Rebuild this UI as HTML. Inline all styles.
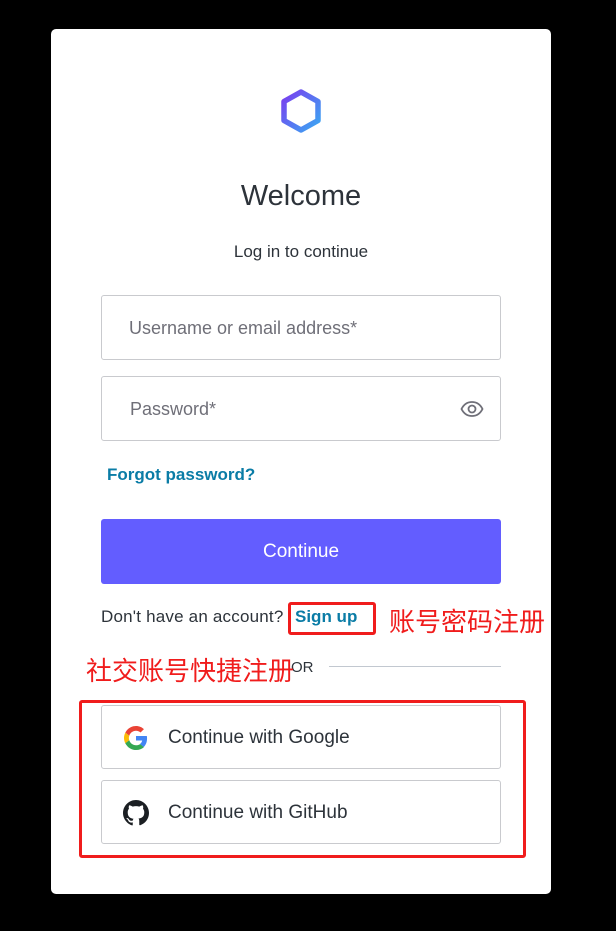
<!DOCTYPE html>
<html><head><style>
body{margin:0;width:616px;height:931px;background:#000;font-family:"Liberation Sans",Arial,sans-serif;position:relative;overflow:hidden}
.card{position:absolute;left:51px;top:29px;width:500px;height:865px;background:#fff;border-radius:5px}
.a{position:absolute}
.inp{position:absolute;left:101px;width:398px;height:63px;border:1px solid #c9cace;border-radius:3px;color:#6f6f78;font-size:18px;box-sizing:border-box}
.btn{position:absolute;left:101px;width:400px;height:64px;border:1px solid #c9cace;border-radius:3px;box-sizing:border-box;font-size:19px;color:#2d333a}
.red{position:absolute;border:3px solid #f01c1c;border-radius:3px;box-sizing:border-box}
.cn{position:absolute;color:#f01c1c;font-family:"Noto Sans CJK SC",sans-serif;font-size:26px;line-height:32px;font-weight:400}
</style></head><body>
<div class="card"></div>
<svg class="a" style="left:278px;top:88px" width="46" height="46" viewBox="0 0 46 46">
<defs><linearGradient id="g" x1="0" y1="0" x2="1" y2="1"><stop offset="0" stop-color="#7a3df0"/><stop offset="1" stop-color="#3aa8f2"/></linearGradient></defs>
<polygon points="23,4 40,13.5 40,32.5 23,42 6,32.5 6,13.5" fill="none" stroke="url(#g)" stroke-width="5.5" stroke-linejoin="round"/>
</svg>
<div class="a" style="left:51px;width:500px;top:180px;text-align:center;font-size:29px;color:#2d333a">Welcome</div>
<div class="a" style="left:51px;width:500px;top:242px;text-align:center;font-size:17px;color:#2d333a">Log in to continue</div>
<div class="inp" style="top:295px;height:65px;width:400px"><span class="a" style="left:27px;top:22px">Username or email address*</span></div>
<div class="inp" style="top:376px;height:65px;width:400px"><span class="a" style="left:28px;top:22px">Password*</span>
<svg class="a" style="left:358px;top:22px" width="24" height="20" viewBox="0 0 24 20"><path d="M1.5 10C4 5 8 3 12 3s8 2 10.5 7C20 15 16 17 12 17S4 15 1.5 10Z" fill="none" stroke="#6f6f78" stroke-width="1.8"/><circle cx="12" cy="10" r="3.5" fill="none" stroke="#6f6f78" stroke-width="1.8"/></svg></div>
<div class="a" style="left:107px;top:465px;font-size:17px;font-weight:bold;color:#0a7ca6">Forgot password?</div>
<div class="a" style="left:101px;top:519px;width:400px;height:65px;background:#635dff;border-radius:3px;color:#fff;font-size:19px;text-align:center;line-height:65px">Continue</div>
<div class="a" style="left:101px;top:607px;font-size:17px;color:#2d333a;letter-spacing:0.2px">Don't have an account?</div>
<div class="a" style="left:295px;top:607px;font-size:17px;font-weight:bold;color:#0a7ca6">Sign up</div>
<div class="red" style="left:288px;top:602px;width:88px;height:33px"></div>
<div class="cn" style="left:389px;top:605px">账号密码注册</div>
<div class="a" style="left:291px;top:659px;font-size:15px;color:#2d333a">OR</div>
<div class="a" style="left:329px;top:666px;width:172px;height:1px;background:#c2c8d0"></div>
<div class="cn" style="left:86px;top:654px">社交账号快捷注册</div>
<div class="btn" style="top:705px"><svg class="a" style="left:22px;top:20px" width="24" height="24" viewBox="0 0 48 48"><path fill="#EA4335" d="M24 9.5c3.5 0 6.6 1.2 9.1 3.6l6.8-6.8C35.8 2.4 30.3 0 24 0 14.6 0 6.6 5.4 2.6 13.3l7.900 6.1C12.4 13.7 17.7 9.5 24 9.5z"/><path fill="#4285F4" d="M46.1 24.5c0-1.6-.1-3.1-.4-4.5H24v9h12.4c-.5 2.9-2.2 5.4-4.7 7.1l7.7 6c4.5-4.2 6.7-10.3 6.7-17.6z"/><path fill="#FBBC05" d="M10.5 28.6c-.5-1.4-.8-3-.8-4.6s.3-3.2.8-4.6l-7.9-6.1C1 16.6 0 20.2 0 24s1 7.4 2.6 10.7l7.9-6.1z"/><path fill="#34A853" d="M24 48c6.5 0 11.9-2.1 15.9-5.8l-7.7-6c-2.2 1.500-5 2.3-8.2 2.3-6.3 0-11.6-4.2-13.5-10l-7.9 6.1C6.6 42.6 14.6 48 24 48z"/></svg><span class="a" style="left:66px;top:21px">Continue with Google</span></div>
<div class="btn" style="top:780px"><svg class="a" style="left:21px;top:19px" width="26" height="26" viewBox="0 0 16 16"><path fill="#1b1f23" d="M8 0C3.6 0 0 3.6 0 8c0 3.5 2.3 6.5 5.5 7.6.4.1.5-.2.5-.4v-1.4c-2.200.5-2.7-1-2.7-1-.4-.9-.9-1.2-.9-1.2-.7-.5.1-.5.1-.5.8.1 1.2.8 1.2.8.7 1.2 1.9.9 2.3.7.1-.5.3-.9.5-1.1-1.8-.2-3.6-.9-3.6-4 0-.9.3-1.6.8-2.1-.1-.2-.4-1 .1-2.1 0 0 .7-.2 2.200.8.6-.2 1.3-.3 2-.3s1.4.1 2 .3c1.5-1 2.2-.8 2.2-.8.4 1.1.2 1.9.1 2.1.5.6.8 1.3.8 2.1 0 3.1-1.900 3.7-3.6 3.9.3.3.5.8.5 1.5v2.2c0 .2.1.5.6.4C13.7 14.5 16 11.5 16 8c0-4.4-3.6-8-8-8z"/></svg><span class="a" style="left:66px;top:21px">Continue with GitHub</span></div>
<div class="red" style="left:79px;top:700px;width:447px;height:158px"></div>
</body></html>
